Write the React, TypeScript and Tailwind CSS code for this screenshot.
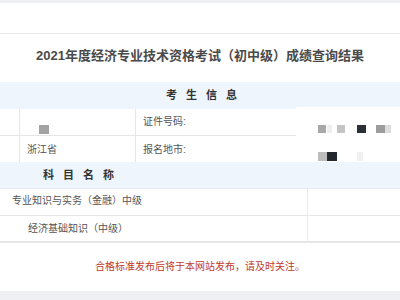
const cjk = "font-['Liberation_Sans','Noto_Sans_CJK_SC',sans-serif]";

const row1Pixels = [
  { w: "w-[8px]", c: "bg-[#a8a8a8]", gap: "ml-0" },
  { w: "w-[5px]", c: "bg-[#eeeeee]", gap: "ml-[1px]" },
  { w: "w-[8px]", c: "bg-[#c4c4c4]", gap: "ml-[5px]" },
  { w: "w-[9px]", c: "bg-[#2b2f36]", gap: "ml-[12px]" },
  { w: "w-[9px]", c: "bg-[#9c9c9c]", gap: "ml-[10px]" },
  { w: "w-[6px]", c: "bg-[#dcdcdc]", gap: "ml-0" },
];

const row2Pixels = [
  { w: "w-[9px]", c: "bg-[#bdbdbd]", gap: "ml-0" },
  { w: "w-[10px]", c: "bg-[#23272e]", gap: "ml-0" },
  { w: "w-[6px]", c: "bg-[#f1f1f1]", gap: "ml-[20px]" },
];

export default function App() {
  return (
    <div className={`w-[400px] h-[300px] overflow-hidden bg-white flex flex-col ${cjk}`}>
      <div className="h-[3px] bg-[#eef0f3]" />
      <div className="h-[31px] border-b border-[#ececec]" />

      {/* title */}
      <div className="h-[48px] flex items-center justify-center pb-[6px]">
        <h1 className="text-[13px] font-bold text-[#4a4a4a] leading-none">
          2021年度经济专业技术资格考试（初中级）成绩查询结果
        </h1>
      </div>

      {/* 考生信息 */}
      <div className="h-[27px] bg-[#eef5fd] flex items-center justify-center pl-[12px]">
        <span className="text-[11px] font-bold text-[#333] tracking-[9px] leading-none">考生信息</span>
      </div>

      <div className="h-[27px] flex border-b border-[#e6e6e6] text-[10px] text-[#555]">
        <div className="w-[20px] border-r border-[#e6e6e6]" />
        <div className="w-[116px] border-r border-[#e6e6e6] flex items-end pb-[1px] pl-[19px]">
          <div className="w-[10px] h-[9px] bg-[#a3a3a3]" />
        </div>
        <div className="w-[160px] flex items-center pl-[7px] pb-[2px]">证件号码:</div>
        <div className="flex-1 flex items-end pb-[3px] pl-[22px] bg-white -mt-[2px] -mb-[1px]">
          {row1Pixels.map((p, i) => (
            <div key={i} className={`${p.w} h-[8px] ${p.c} ${p.gap}`} />
          ))}
        </div>
      </div>

      <div className="h-[26px] flex text-[10px] text-[#555]">
        <div className="w-[20px] border-r border-[#e6e6e6]" />
        <div className="w-[116px] border-r border-[#e6e6e6] flex items-center pl-[7px]">浙江省</div>
        <div className="w-[160px] flex items-center pl-[7px]">报名地市:</div>
        <div className="flex-1 flex items-end pb-[1px] pl-[22px]">
          {row2Pixels.map((p, i) => (
            <div key={i} className={`${p.w} h-[9px] ${p.c} ${p.gap}`} />
          ))}
        </div>
      </div>

      {/* 科目名称 */}
      <div className="h-[27px] bg-[#eef5fd] border-b border-[#e2ebf5] flex items-center">
        <span className="pl-[43px] text-[11px] font-bold text-[#333] tracking-[9px] leading-none">科目名称</span>
      </div>

      <div className="h-[27px] flex border-b border-[#e8e8e8] text-[10px] text-[#555]">
        <div className="w-[308px] border-r border-[#ececec] flex items-center pl-[12px] pb-[3px]">
          专业知识与实务（金融）中级
        </div>
        <div className="flex-1" />
      </div>

      <div className="h-[27px] flex border-b-2 border-[#e6e6e6] text-[10px] text-[#555]">
        <div className="w-[308px] border-r border-[#ececec] flex items-center pl-[28px] pb-[1px]">
          经济基础知识（中级）
        </div>
        <div className="flex-1" />
      </div>

      {/* notice */}
      <div className="h-[48px] flex items-center justify-center">
        <p className="text-[10px] text-[#c0392b] leading-none">合格标准发布后将于本网站发布，请及时关注。</p>
      </div>

      <div className="flex-1 bg-[#eef0f4]" />
    </div>
  );
}
